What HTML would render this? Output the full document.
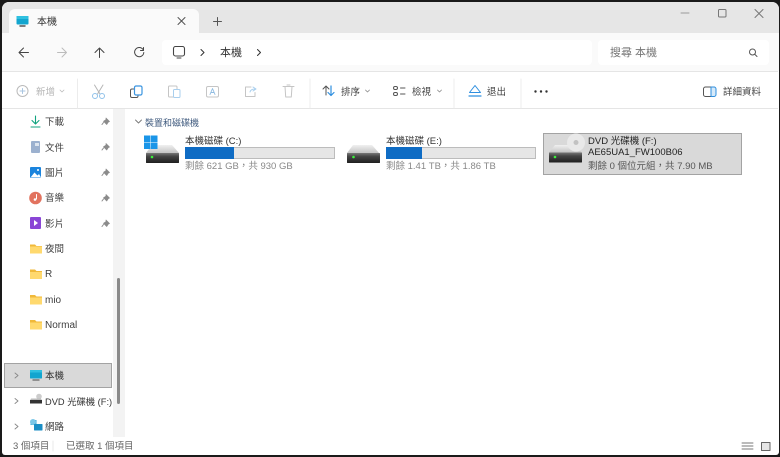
<!DOCTYPE html>
<html><head><meta charset="utf-8">
<style>
html,body{margin:0;padding:0;width:780px;height:457px;overflow:hidden;background:#1a1a1a}
*{box-sizing:border-box}
#r{position:absolute;left:0;top:0;width:780px;height:457px;filter:blur(.3px)}
#w{position:absolute;left:1.500px;top:1.500px;width:777px;height:453.500px;background:#fff;border-radius:7px 7px 3px 3px;overflow:hidden;}
.a{position:absolute}
.t{position:absolute;font-family:"Liberation Sans","Noto Sans CJK TC",sans-serif;font-size:10px;line-height:14px;color:#3f3f3f;white-space:nowrap}
svg{position:absolute;left:0;top:0}
</style></head><body><div id="r">
<div id="w"></div>
<div class="a" style="left:1.500px;top:1.500px;width:777px;height:31.500px;background:#e6e6e6;border-radius:7px 7px 0 0"></div>
<div class="a" style="left:1.500px;top:33px;width:777px;height:38px;background:#fafafa"></div>
<div class="a" style="left:9px;top:9px;width:190px;height:25px;background:#fafafa;border-radius:6px 6px 0 0"></div>
<div class="a" style="left:162px;top:40px;width:430px;height:25px;background:#fff;border-radius:4px"></div>
<div class="a" style="left:598px;top:40px;width:171px;height:25px;background:#fff;border-radius:4px"></div>
<div class="a" style="left:2px;top:71px;width:776px;height:1px;background:#e5e5e5"></div>
<div class="a" style="left:2px;top:108px;width:776px;height:1px;background:#e5e5e5"></div>
<div class="a" style="left:113px;top:109px;width:12px;height:328px;background:#f3f3f3"></div>
<div class="a" style="left:117px;top:278px;width:3px;height:126px;background:#8a8a8a;border-radius:2px"></div>
<div class="a" style="left:4px;top:363px;width:108px;height:25px;background:#d9d9d9;border:1px solid #a3a3a3"></div>
<div class="a" style="left:543px;top:133px;width:199px;height:42px;background:#d9d9d9;border:1px solid #a3a3a3"></div>

<svg width="780" height="457" fill="none" stroke-linecap="round" stroke-linejoin="round">
<defs>
<linearGradient id="b" x1="0" y1="0" x2="0" y2="1"><stop offset="0" stop-color="#777"/><stop offset=".35" stop-color="#444"/><stop offset="1" stop-color="#1f1f1f"/></linearGradient>
<linearGradient id="c" x1="0" y1="0" x2="0" y2="1"><stop offset="0" stop-color="#f0f0f0"/><stop offset="1" stop-color="#c4c4c4"/></linearGradient>
</defs>
<!-- tab icon -->
<rect x="16.500" y="16" width="12" height="8.500" rx="1" fill="#12a5cf"/>
<rect x="16.500" y="16" width="12" height="3" fill="#2fc0e0"/>
<path d="M20 26h5" stroke="#555" stroke-width="1.400"/>
<!-- tab x, plus -->
<path d="M178 17.500l7 7M185 17.500l-7 7M213.500 21.500h8M217.500 17.500v8" stroke="#555"/>
<!-- window buttons -->
<path d="M681 13h8" stroke="#9a9a9a"/>
<rect x="718.500" y="9.500" width="7.500" height="7.500" rx="1" stroke="#777"/>
<path d="M755 9.500l8 8M763 9.500l-8 8" stroke="#777"/>
<!-- nav arrows -->
<path d="M19.500 52.500h9M23.500 48l-4.500 4.500 4.500 4.500" stroke="#444"/>
<path d="M57.500 52.500h9M62 48l4.500 4.500-4.500 4.500" stroke="#bcbcbc"/>
<path d="M99.500 57.500v-9M95 52.500l4.500-4.500 4.500 4.500" stroke="#444"/>
<path d="M143 49.500a4.600 4.600 0 1 0 .8 3M143.500 47.500v3h-3" stroke="#444"/>
<!-- address pc -->
<rect x="173.500" y="46.500" width="11" height="9.500" rx="2" stroke="#444" stroke-width="1.100"/>
<path d="M177 58h4" stroke="#444"/>
<path d="M201 49.500l3 3-3 3M257.500 49.500l3 3-3 3" stroke="#333"/>
<!-- search icon -->
<circle cx="752.500" cy="52" r="3" stroke="#555"/><path d="M755 54.500l2 2" stroke="#555"/>
<!-- toolbar -->
<circle cx="22.500" cy="91" r="5.500" stroke="#bbb"/>
<path d="M22.500 88.500v5M20 91h5" stroke="#a9c5e0"/>
<path d="M60 90l2 2 2-2" stroke="#bbb" stroke-width=".8"/>
<path d="M77.500 79v29" stroke="#ececec"/>
<path d="M94.500 85l5.500 9M103 85l-5.500 9" stroke="#b5b5b5"/>
<circle cx="95" cy="96" r="2.500" stroke="#90c2ea"/><circle cx="102" cy="96" r="2.500" stroke="#90c2ea"/>
<rect x="130.500" y="89" width="7.500" height="8.500" rx="1.500" stroke="#555"/>
<rect x="134.500" y="86" width="7.500" height="9" rx="1.500" fill="#fff" stroke="#3b95e0" stroke-width="1.200"/>
<rect x="168.500" y="86" width="8.500" height="11" rx="1" stroke="#c5c5c5"/>
<rect x="173.500" y="89.500" width="6.500" height="8" rx="1" fill="#fff" stroke="#a9cfee"/>
<rect x="206.500" y="86.500" width="12" height="10.500" rx="1.500" stroke="#c5c5c5"/>
<path d="M210 94.500l2.500-6 2.500 6M211 92.500h3" stroke="#8fbce2" stroke-width=".9"/>
<path d="M251 87h-5.500v9.500h9.500v-4" stroke="#c5c5c5"/>
<path d="M250 92c.5-2 2-3 5-3M253 87l3 2-3 2" stroke="#a9cfee"/>
<path d="M283 86.500h11M285 86.500l.7 10.500h5.600l.7-10.500M287 85h3" stroke="#c5c5c5"/>
<path d="M310 79v29M454 79v29M521 79v29" stroke="#ececec"/>
<path d="M326 95v-9M323 89l3-3 3 3" stroke="#555"/>
<path d="M331 86v9.500M328 92.500l3 3 3-3" stroke="#2f8fdf" stroke-width="1.200"/>
<path d="M365.500 90l2 2 2-2M437.500 90l2 2 2-2" stroke="#888" stroke-width=".8"/>
<rect x="393.500" y="86.500" width="4" height="3" rx="1.500" stroke="#555"/><rect x="393.500" y="92.500" width="4" height="3" rx="1.500" stroke="#555"/>
<path d="M400.500 88h4.500M400.500 94h4.500" stroke="#555"/>
<path d="M469.500 92.500l5.500-7 5.500 7z" stroke="#2f8fdf"/>
<path d="M469 96h12" stroke="#2f8fdf" stroke-width="1.200"/>
<circle cx="535.500" cy="91.500" r="1.200" fill="#333"/><circle cx="541" cy="91.500" r="1.200" fill="#333"/><circle cx="546.500" cy="91.500" r="1.200" fill="#333"/>
<rect x="703.500" y="87" width="12" height="9.500" rx="2" stroke="#555"/>
<path d="M711 87h3a2 2 0 0 1 2 2v5.500a2 2 0 0 1-2 2h-3z" fill="#d6eafa" stroke="#2f8fdf"/>
<!-- sidebar icons -->
<path d="M35.500 116v7.500M32 120.500l3.500 3.500 3.500-3.500M31 127h9" stroke="#10a37f" stroke-width="1.100"/>
<rect x="31" y="141" width="9" height="12" rx="1" fill="#9cb1cf"/><rect x="35" y="143" width="4" height="3" fill="#dde5ef"/>
<rect x="30" y="167" width="11" height="11" rx="1" fill="#1b84dd"/>
<path d="M30.500 177.500l4-5 3 3 1.500-1.500 2 3.500z" fill="#fff"/><circle cx="38" cy="170" r="1" fill="#fff"/>
<circle cx="35.500" cy="198" r="6.300" fill="#e2735f"/><path d="M36.500 194.500v4.500" stroke="#fff"/><circle cx="35" cy="199.500" r="1.300" fill="#fff"/>
<rect x="30" y="217" width="11" height="12" rx="1" fill="#8a46d6"/><path d="M34 220v6l4-3z" fill="#fff"/>
<!-- pins -->
<g fill="#8b8b8b" stroke="#8b8b8b" stroke-width=".7">
<path d="M106 118l3.500 3.500-1.200.5-1.600 2.500-3.200-3.200 2.500-1.600z"/>
<path d="M106 143.500l3.500 3.500-1.200.5-1.600 2.500-3.200-3.200 2.500-1.600z"/>
<path d="M106 169l3.500 3.500-1.200.5-1.600 2.500-3.200-3.200 2.500-1.600z"/>
<path d="M106 194.500l3.500 3.500-1.200.5-1.600 2.500-3.200-3.200 2.500-1.600z"/>
<path d="M106 220l3.500 3.500-1.200.5-1.600 2.500-3.200-3.200 2.500-1.600z"/>
</g>
<g stroke="#8b8b8b"><path d="M103.500 122.500l-1.500 2M103.500 148l-1.500 2M103.500 173.500l-1.500 2M103.500 199l-1.500 2M103.500 224.500l-1.500 2"/></g>
<!-- folders -->
<g>
<path d="M30 244.500h5l1.500 1.500h5.500v7.500H30z" fill="#f0b93a"/><rect x="30" y="246.500" width="12" height="7" fill="#ffd96e"/>
<path d="M30 269.500h5l1.500 1.500h5.500v8H30z" fill="#f0b93a"/><rect x="30" y="272" width="12" height="7" fill="#ffd96e"/>
<path d="M30 295h5l1.500 1.500h5.500v8H30z" fill="#f0b93a"/><rect x="30" y="297.500" width="12" height="7" fill="#ffd96e"/>
<path d="M30 320h5l1.500 1.500h5.500v8H30z" fill="#f0b93a"/><rect x="30" y="322.500" width="12" height="7" fill="#ffd96e"/>
</g>
<!-- tree chevrons -->
<path d="M15 373l3 2.500-3 2.500M15 398.500l3 2.500-3 2.500M15 424l3 2.500-3 2.500" stroke="#888" stroke-width=".9"/>
<!-- nav pc -->
<rect x="30" y="370" width="12" height="8.500" rx=".5" fill="#12a5cf"/><rect x="30" y="370" width="12" height="2.500" fill="#2fc0e0"/>
<path d="M33 380h6" stroke="#666" stroke-width="1.300"/>
<!-- nav dvd -->
<circle cx="39" cy="396.500" r="2.800" fill="#ccc"/>
<path d="M31 398.500h10l1 2H30z" fill="#bbb"/><rect x="30" y="400" width="12" height="3.500" fill="#333"/>
<!-- nav net -->
<rect x="30.500" y="420" width="6" height="5" fill="#3aa8d8"/><circle cx="33" cy="422" r="3" fill="#7cc7e8"/>
<rect x="34" y="424" width="8.500" height="6.500" rx=".5" fill="#1b8ec5"/>
<!-- section chevron -->
<path d="M135.500 120l3 3 3-3" stroke="#777" stroke-width=".9"/>
<!-- drive C -->
<path d="M152 145h20l7 8H146z" fill="url(#c)"/>
<rect x="146" y="153" width="33" height="10" rx=".5" fill="url(#b)"/><circle cx="152" cy="157" r="1.300" fill="#3bf03b"/>
<!-- win logo -->
<g fill="#1a95e8"><rect x="144" y="135.500" width="6.500" height="6.500"/><rect x="151" y="135.500" width="6.500" height="6.500"/><rect x="144" y="142.500" width="6.500" height="6.500"/><rect x="151" y="142.500" width="6.500" height="6.500"/></g>
<!-- drive E -->
<path d="M353 145h19l7 8H347z" fill="url(#c)"/>
<rect x="347" y="153" width="33" height="10" rx=".5" fill="url(#b)"/><circle cx="353.500" cy="157" r="1.300" fill="#3bf03b"/>
<!-- dvd drive -->
<path d="M555 145h20l7 7.500h-33z" fill="url(#c)"/>
<circle cx="576" cy="142.500" r="9" fill="#e9e9e9"/><circle cx="576" cy="142.500" r="2.500" fill="#c2c2c2"/>
<rect x="549" y="152.500" width="33" height="10" rx=".5" fill="url(#b)"/><circle cx="555" cy="157" r="1.300" fill="#3bf03b"/>
<!-- status -->
<path d="M53 441v10" stroke="#e8e8e8"/>
<path d="M742 443h11M742 446h11M742 449h11" stroke="#777" stroke-width=".9"/>
<rect x="761.500" y="442.500" width="8.500" height="8" fill="#e6e6e6" stroke="#666"/>
</svg>

<!-- capacity bars -->
<div class="a" style="left:185px;top:147px;width:150px;height:12px;background:#e6e6e6;border:1px solid #bcbcbc"></div>
<div class="a" style="left:185px;top:147px;width:49px;height:12px;background:#0f6cc4"></div>
<div class="a" style="left:386px;top:147px;width:150px;height:12px;background:#e6e6e6;border:1px solid #bcbcbc"></div>
<div class="a" style="left:386px;top:147px;width:36px;height:12px;background:#0f6cc4"></div>

<!-- text -->
<div class="t" style="left:37px;top:16px;color:#333">本機</div>
<div class="t" style="left:220px;top:46px;font-size:11px;color:#333">本機</div>
<div class="t" style="left:610px;top:46px;font-size:11px;color:#777">搜尋 本機</div>
<div class="t" style="left:36px;top:86px;font-size:9.500px;color:#b5b5b5">新增</div>
<div class="t" style="left:341px;top:86px;font-size:9.500px;color:#444">排序</div>
<div class="t" style="left:412px;top:86px;font-size:9.500px;color:#444">檢視</div>
<div class="t" style="left:487px;top:86px;font-size:9.500px;color:#444">退出</div>
<div class="t" style="left:723px;top:86px;font-size:9.500px;color:#444">詳細資料</div>
<div class="t" style="left:45px;top:116px;font-size:9.500px">下載</div>
<div class="t" style="left:45px;top:142px;font-size:9.500px">文件</div>
<div class="t" style="left:45px;top:167px;font-size:9.500px">圖片</div>
<div class="t" style="left:45px;top:192px;font-size:9.500px">音樂</div>
<div class="t" style="left:45px;top:218px;font-size:9.500px">影片</div>
<div class="t" style="left:45px;top:243px;font-size:9.500px">夜間</div>
<div class="t" style="left:45px;top:268px">R</div>
<div class="t" style="left:45px;top:294px">mio</div>
<div class="t" style="left:45px;top:319px">Normal</div>
<div class="t" style="left:45px;top:370px;font-size:9.500px;color:#333">本機</div>
<div class="t" style="left:45px;top:395px;font-size:9.300px;color:#333">DVD 光碟機 (F:)</div>
<div class="t" style="left:45px;top:421px;font-size:9.500px">網路</div>
<div class="t" style="left:145px;top:116px;font-size:9px;color:#3f5a7e">裝置和磁碟機</div>
<div class="t" style="left:185px;top:135px;font-size:9.500px;color:#333">本機磁碟 (C:)</div>
<div class="t" style="left:185px;top:160px;font-size:9.500px;color:#888">剩餘 621 GB，共 930 GB</div>
<div class="t" style="left:386px;top:135px;font-size:9.500px;color:#333">本機磁碟 (E:)</div>
<div class="t" style="left:386px;top:160px;font-size:9.500px;color:#888">剩餘 1.41 TB，共 1.86 TB</div>
<div class="t" style="left:588px;top:135px;font-size:9.500px;color:#222">DVD 光碟機 (F:)</div>
<div class="t" style="left:588px;top:146px;font-size:9.500px;color:#222">AE65UA1_FW100B06</div>
<div class="t" style="left:588px;top:160px;font-size:9.500px;color:#555">剩餘 0 個位元組，共 7.90 MB</div>
<div class="t" style="left:13px;top:440px;font-size:9.500px;color:#666">3 個項目</div>
<div class="t" style="left:66px;top:440px;font-size:9.500px;color:#666">已選取 1 個項目</div>
</div></body></html>
